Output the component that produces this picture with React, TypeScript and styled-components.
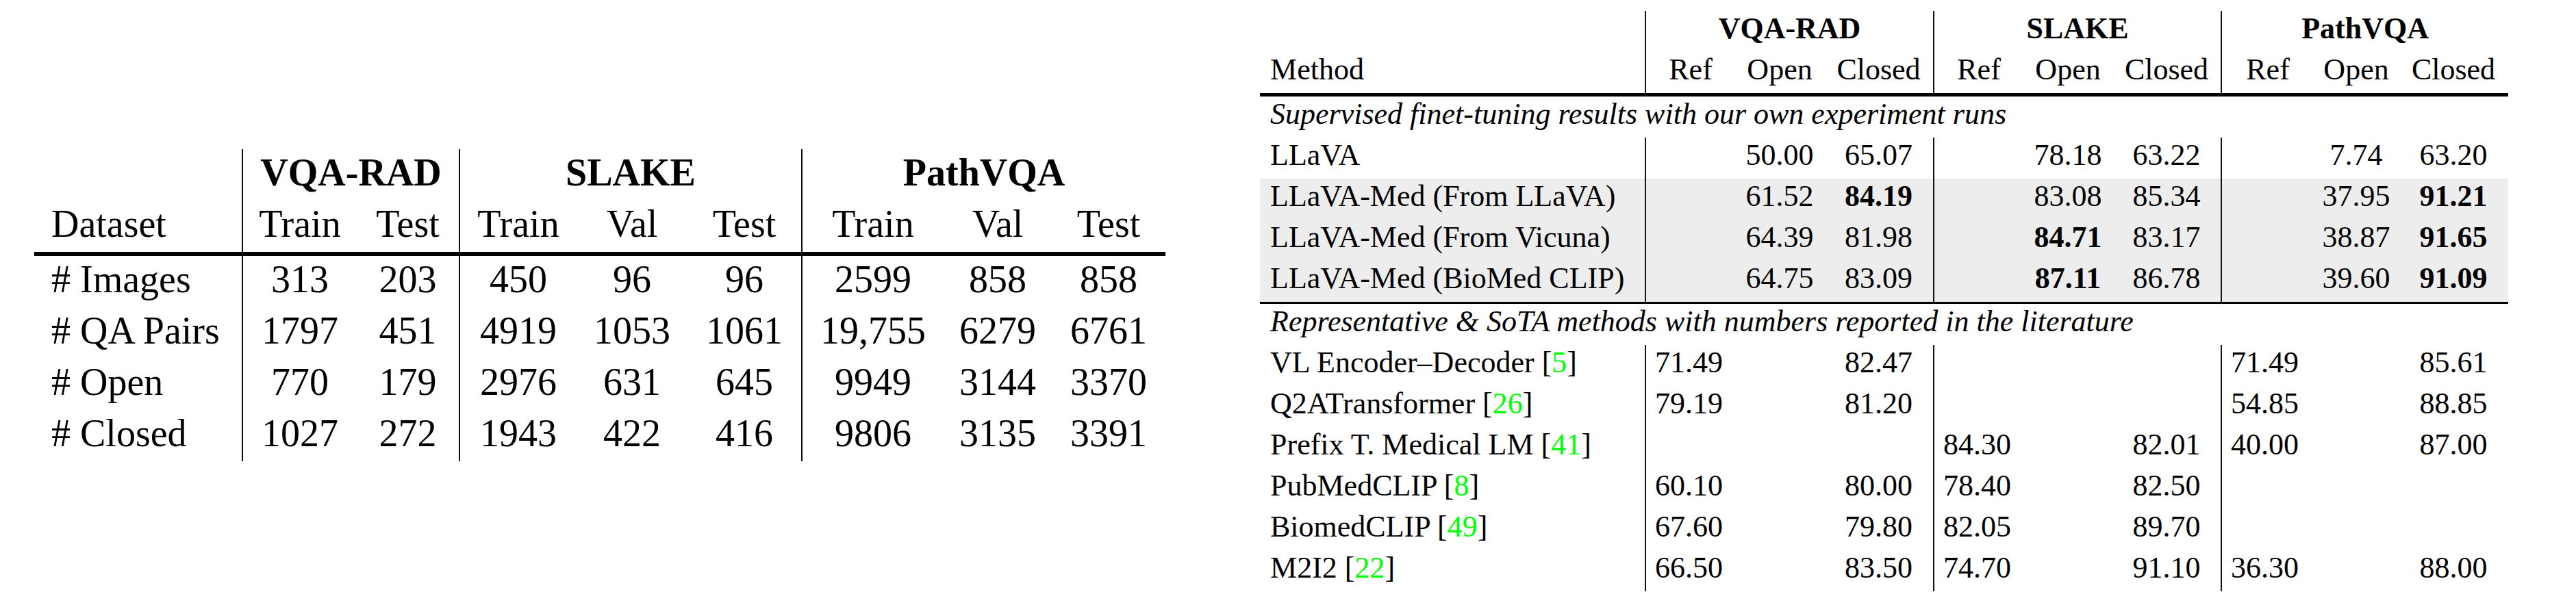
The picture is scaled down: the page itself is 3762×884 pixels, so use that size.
import styled, { createGlobalStyle } from 'styled-components';

const GlobalStyle = createGlobalStyle`
  html, body {
    margin: 0;
    padding: 0;
    background: #fff;
  }
  body {
    width: 3762px;
    height: 884px;
    overflow: hidden;
  }
`;

const Page = styled.div`
  display: flex;
  align-items: flex-start;
  gap: 138px;
  width: 3762px;
  height: 884px;
  padding-left: 50px;
  box-sizing: border-box;
  font-family: 'Liberation Serif', 'Times New Roman', serif;
  color: #000;
`;

// one table; font size, row height and spacing vary between the two
const Table = styled.table<{ $size: number; $lh: number; $pb: number; $top: number; $width: number }>`
  flex: none;
  border-collapse: separate;
  border-spacing: 0;
  table-layout: fixed;
  width: ${(p) => p.$width}px;
  margin-top: ${(p) => p.$top}px;
  font-size: ${(p) => p.$size}px;
  line-height: ${(p) => p.$lh}px;
  --row-pad: ${(p) => p.$pb}px;
`;

const Col = styled.col<{ $w: number }>`
  width: ${(p) => p.$w}px;
`;

const Row = styled.tr<{ $shade?: boolean }>`
  background: ${(p) => (p.$shade ? '#ededed' : 'transparent')};
`;

const Cell = styled.td<{
  $left?: boolean;
  $pad?: number;
  $line?: boolean;
  $rule?: number;
  $bold?: boolean;
  $italic?: boolean;
}>`
  padding: 0 0 var(--row-pad) ${(p) => p.$pad ?? 0}px;
  vertical-align: top;
  white-space: nowrap;
  text-align: ${(p) => (p.$left ? 'left' : 'center')};
  font-weight: ${(p) => (p.$bold ? 700 : 400)};
  font-style: ${(p) => (p.$italic ? 'italic' : 'normal')};
  border-left: ${(p) => (p.$line ? '2px solid #111' : 'none')};
  border-bottom: ${(p) => (p.$rule ? `${p.$rule}px solid #000` : 'none')};
`;

const Cite = styled.span`
  color: #00ff00;
`;

/* ---------- left table: dataset statistics ---------- */

const statCols = [303, 168, 149, 172, 162, 166, 208, 158, 166];
const statGroups = [
  { name: 'VQA-RAD', splits: ['Train', 'Test'] },
  { name: 'SLAKE', splits: ['Train', 'Val', 'Test'] },
  { name: 'PathVQA', splits: ['Train', 'Val', 'Test'] },
];
const statRows: [string, string[]][] = [
  ['# Images', ['313', '203', '450', '96', '96', '2599', '858', '858']],
  ['# QA Pairs', ['1797', '451', '4919', '1053', '1061', '19,755', '6279', '6761']],
  ['# Open', ['770', '179', '2976', '631', '645', '9949', '3144', '3370']],
  ['# Closed', ['1027', '272', '1943', '422', '416', '9806', '3135', '3391']],
];
// columns that open a dataset group get the vertical line
const statStarts = [0, 2, 5];

function StatsTable() {
  return (
    <Table $size={56} $lh={68} $pb={7} $top={218} $width={1652}>
      <colgroup>
        {statCols.map((w, i) => (
          <Col key={i} $w={w} />
        ))}
      </colgroup>
      <tbody>
        <Row>
          <Cell />
          {statGroups.map((g) => (
            <Cell key={g.name} colSpan={g.splits.length} $line $bold>
              {g.name}
            </Cell>
          ))}
        </Row>
        <Row>
          <Cell $left $pad={25} $rule={6}>
            Dataset
          </Cell>
          {statGroups.flatMap((g) =>
            g.splits.map((s, i) => (
              <Cell key={g.name + s} $line={i === 0} $rule={6}>
                {s}
              </Cell>
            ))
          )}
        </Row>
        {statRows.map(([label, vals]) => (
          <Row key={label}>
            <Cell $left $pad={25}>
              {label}
            </Cell>
            {vals.map((v, i) => (
              <Cell key={i} $line={statStarts.includes(i)}>
                {v}
              </Cell>
            ))}
          </Row>
        ))}
      </tbody>
    </Table>
  );
}

/* ---------- right table: results ---------- */

const resCols = [562, 132, 130, 159, 132, 130, 158, 136, 124, 160];
const datasets = ['VQA-RAD', 'SLAKE', 'PathVQA'];

// "!" marks a bold (best) value
const ownRuns: { name: string; shade?: boolean; last?: boolean; vals: string[] }[] = [
  { name: 'LLaVA', vals: ['', '50.00', '65.07', '', '78.18', '63.22', '', '7.74', '63.20'] },
  {
    name: 'LLaVA-Med (From LLaVA)',
    shade: true,
    vals: ['', '61.52', '!84.19', '', '83.08', '85.34', '', '37.95', '!91.21'],
  },
  {
    name: 'LLaVA-Med (From Vicuna)',
    shade: true,
    vals: ['', '64.39', '81.98', '', '!84.71', '83.17', '', '38.87', '!91.65'],
  },
  {
    name: 'LLaVA-Med (BioMed CLIP)',
    shade: true,
    last: true,
    vals: ['', '64.75', '83.09', '', '!87.11', '86.78', '', '39.60', '!91.09'],
  },
];

// literature numbers: [open, closed] per dataset, null when not reported
const literature: { name: string; cite: string; vals: ([string, string] | null)[] }[] = [
  { name: 'VL Encoder–Decoder', cite: '5', vals: [['71.49', '82.47'], null, ['71.49', '85.61']] },
  { name: 'Q2ATransformer', cite: '26', vals: [['79.19', '81.20'], null, ['54.85', '88.85']] },
  { name: 'Prefix T. Medical LM', cite: '41', vals: [null, ['84.30', '82.01'], ['40.00', '87.00']] },
  { name: 'PubMedCLIP', cite: '8', vals: [['60.10', '80.00'], ['78.40', '82.50'], null] },
  { name: 'BiomedCLIP', cite: '49', vals: [['67.60', '79.80'], ['82.05', '89.70'], null] },
  { name: 'M2I2', cite: '22', vals: [['66.50', '83.50'], ['74.70', '91.10'], ['36.30', '88.00']] },
];

function ResultsTable() {
  return (
    <Table $size={44} $lh={52} $pb={8} $top={16} $width={1823}>
      <colgroup>
        {resCols.map((w, i) => (
          <Col key={i} $w={w} />
        ))}
      </colgroup>
      <tbody>
        <Row>
          <Cell />
          {datasets.map((d) => (
            <Cell key={d} colSpan={3} $line $bold>
              {d}
            </Cell>
          ))}
        </Row>
        <Row>
          <Cell $left $pad={15} $rule={5}>
            Method
          </Cell>
          {datasets.flatMap((d) =>
            ['Ref', 'Open', 'Closed'].map((h, i) => (
              <Cell key={d + h} $line={i === 0} $rule={5}>
                {h}
              </Cell>
            ))
          )}
        </Row>
        <Row>
          <Cell colSpan={10} $left $pad={15} $italic>
            Supervised finet-tuning results with our own experiment runs
          </Cell>
        </Row>
        {ownRuns.map((r) => (
          <Row key={r.name} $shade={r.shade}>
            <Cell $left $pad={15} $rule={r.last ? 3 : 0}>
              {r.name}
            </Cell>
            {r.vals.map((v, i) => (
              <Cell key={i} $line={i % 3 === 0} $bold={v.startsWith('!')} $rule={r.last ? 3 : 0}>
                {v.replace('!', '')}
              </Cell>
            ))}
          </Row>
        ))}
        <Row>
          <Cell colSpan={10} $left $pad={15} $italic>
            Representative &amp; SoTA methods with numbers reported in the literature
          </Cell>
        </Row>
        {literature.map((r) => (
          <Row key={r.name}>
            <Cell $left $pad={15}>
              {r.name} [<Cite>{r.cite}</Cite>]
            </Cell>
            {r.vals.flatMap((pair, i) => [
              <Cell key={`a${i}`} colSpan={2} $line $left $pad={13}>
                {pair ? pair[0] : ''}
              </Cell>,
              <Cell key={`b${i}`}>{pair ? pair[1] : ''}</Cell>,
            ])}
          </Row>
        ))}
      </tbody>
    </Table>
  );
}

export default function App() {
  return (
    <>
      <GlobalStyle />
      <Page>
        <StatsTable />
        <ResultsTable />
      </Page>
    </>
  );
}
